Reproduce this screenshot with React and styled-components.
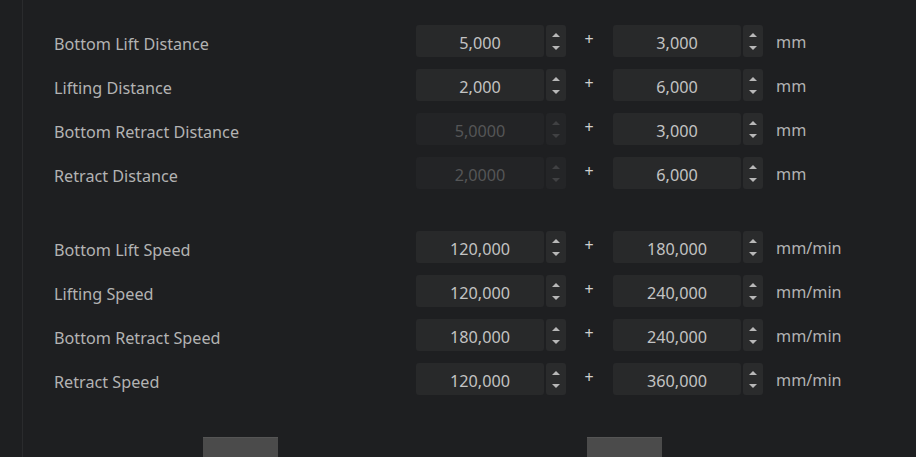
import React from "react";
import styled, { createGlobalStyle } from "styled-components";

const Global = createGlobalStyle`
  html, body { margin: 0; padding: 0; background: #1e1f21; }
  body { width: 916px; height: 457px; overflow: hidden; font-family: "Noto Sans", "Open Sans", sans-serif; }
`;

const Page = styled.div`
  width: 916px;
  height: 457px;
  background: #1e1f21;
  overflow: hidden;
  box-sizing: border-box;
  padding-left: 22px;
`;

const Panel = styled.div`
  height: 100%;
  border-left: 1px solid #2a2b2d;
  padding: 25px 0 0 31px;
  box-sizing: border-box;
  display: flex;
  flex-direction: column;
`;

const Section = styled.div`
  display: flex;
  flex-direction: column;
  gap: 12px;
  & + & { margin-top: 42px; }
`;

const Row = styled.div`
  display: grid;
  grid-template-columns: 362px 150px 47px 150px auto;
  align-items: center;
  height: 32px;
`;

const Label = styled.div`
  color: #b3b3b3;
  font-size: 16.2px;
  padding-top: 6px;
  white-space: nowrap;
`;

const Unit = styled.div`
  color: #b3b3b3;
  font-size: 16.2px;
  padding-left: 13px;
  padding-top: 2px;
  white-space: nowrap;
`;

const Plus = styled.div`
  color: #cfcfcf;
  font-size: 16px;
  text-align: center;
  padding-right: 1px;
  margin-top: -4px;
`;

const Spin = styled.div`
  display: flex;
  gap: 2px;
  height: 32px;
`;

const Field = styled.div`
  width: 128px;
  height: 32px;
  border-radius: 3px;
  background: ${(p) => (p.$disabled ? "#232426" : "#28292a")};
  color: ${(p) => (p.$disabled ? "#555657" : "#c3c3c3")};
  font-size: 16.2px;
  padding-top: 3px;
  box-sizing: border-box;
  display: flex;
  align-items: center;
  justify-content: center;
`;

const Arrows = styled.div`
  width: 20px;
  height: 32px;
  border-radius: 3px;
  background: ${(p) => (p.$disabled ? "#242527" : "#2a2b2c")};
  display: flex;
  flex-direction: column;
  align-items: center;
  justify-content: space-between;
  padding: 8px 0 7px;
  box-sizing: border-box;
`;

const Tri = styled.div`
  width: 0;
  height: 0;
  border-left: 4px solid transparent;
  border-right: 4px solid transparent;
  ${(p) =>
    p.$up
      ? `border-bottom: 4px solid ${p.$disabled ? "#404143" : "#b8b8b8"};`
      : `border-top: 4px solid ${p.$disabled ? "#404143" : "#b8b8b8"};`}
`;

const Footer = styled.div`
  display: flex;
  gap: 309px;
  margin-top: 42px;
  padding-left: 149px;
`;

const FootButton = styled.div`
  width: 75px;
  height: 30px;
  background: #4b4b4b;
  border-top: 1px solid #555;
  box-sizing: border-box;
`;

function SpinBox({ value, disabled }) {
  return (
    <Spin>
      <Field $disabled={disabled}>{value}</Field>
      <Arrows $disabled={disabled}>
        <Tri $up $disabled={disabled} />
        <Tri $disabled={disabled} />
      </Arrows>
    </Spin>
  );
}

const distance = [
  ["Bottom Lift Distance", "5,000", "3,000", false],
  ["Lifting Distance", "2,000", "6,000", false],
  ["Bottom Retract Distance", "5,0000", "3,000", true],
  ["Retract Distance", "2,0000", "6,000", true],
];

const speed = [
  ["Bottom Lift Speed", "120,000", "180,000"],
  ["Lifting Speed", "120,000", "240,000"],
  ["Bottom Retract Speed", "180,000", "240,000"],
  ["Retract Speed", "120,000", "360,000"],
];

export default function App() {
  return (
    <Page>
      <Global />
      <Panel>
        <Section>
          {distance.map(([l, a, b, d]) => (
            <Row key={l}>
              <Label>{l}</Label>
              <SpinBox value={a} disabled={d} />
              <Plus>+</Plus>
              <SpinBox value={b} />
              <Unit>mm</Unit>
            </Row>
          ))}
        </Section>
        <Section>
          {speed.map(([l, a, b]) => (
            <Row key={l}>
              <Label>{l}</Label>
              <SpinBox value={a} />
              <Plus>+</Plus>
              <SpinBox value={b} />
              <Unit>mm/min</Unit>
            </Row>
          ))}
        </Section>
        <Footer>
          <FootButton />
          <FootButton />
        </Footer>
      </Panel>
    </Page>
  );
}
